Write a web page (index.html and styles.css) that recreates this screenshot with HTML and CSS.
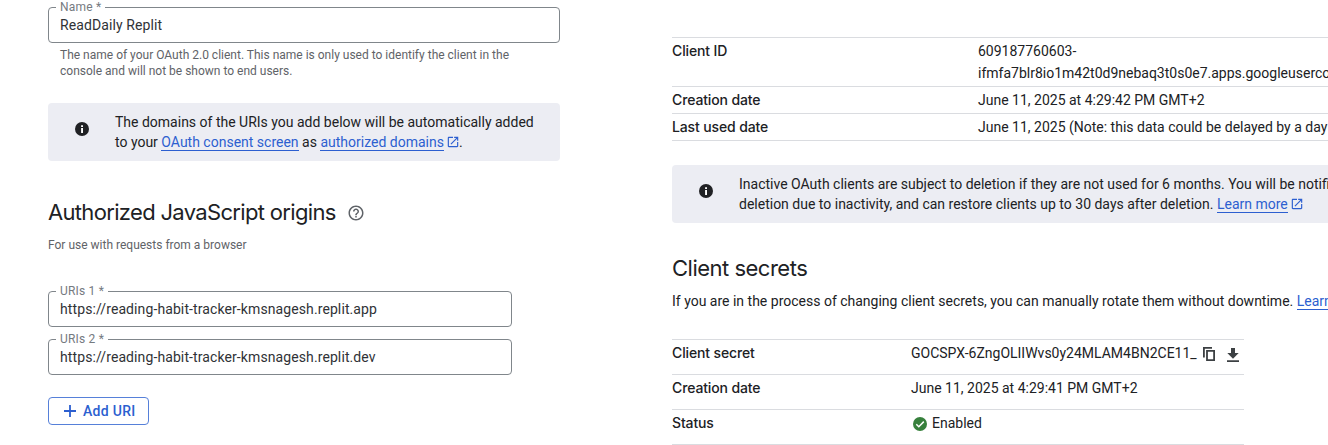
FILE: index.html
```html
<!DOCTYPE html>
<html lang="en">
<head>
<meta charset="utf-8">
<title>OAuth client</title>
<link rel="stylesheet" href="styles.css">
</head>
<body>
<svg class="defs" width="0" height="0" aria-hidden="true">
  <symbol id="info" viewBox="0 0 14 14"><circle cx="7" cy="7" r="7" fill="#202124"/><path d="M6.1 3.3h1.9v1.8H6.1zM6.1 6.1h1.9v4.8H6.1z" fill="#fff"/></symbol>
  <symbol id="external" viewBox="0 0 24 24"><path fill="currentColor" d="M19 19H5V5h7V3H5c-1.11 0-2 .9-2 2v14c0 1.1.89 2 2 2h14c1.1 0 2-.9 2-2v-7h-2v7zM14 3v2h3.59l-9.83 9.83 1.41 1.41L19 6.41V10h2V3h-7z"/></symbol>
</svg>
<main class="page">
  <section class="form">
    <fieldset class="field">
      <legend>Name *</legend>
      <div class="value">ReadDaily Replit</div>
    </fieldset>
    <p class="hint">The name of your OAuth 2.0 client. This name is only used to identify the client in the<br>console and will not be shown to end users.</p>
    <div class="notice">
      <svg class="notice-icon"><use href="#info"/></svg>
      <p class="domains">The domains of the URIs you add below will be automatically added<br>to your <a>OAuth consent screen</a> as <a>authorized domains</a><svg class="ext"><use href="#external"/></svg>.</p>
    </div>
    <h2 class="origins"><span>Authorized JavaScript origins</span>
      <svg class="help" viewBox="0 0 24 24"><path fill="#5f6368" d="M11 18h2v-2h-2v2zm1-16C6.48 2 2 6.48 2 12s4.48 10 10 10 10-4.48 10-10S17.52 2 12 2zm0 18c-4.41 0-8-3.59-8-8s3.59-8 8-8 8 3.59 8 8-3.59 8-8 8zm0-14c-2.21 0-4 1.79-4 4h2c0-1.1.9-2 2-2s2 .9 2 2c0 2-3 1.75-3 5h2c0-2.25 3-2.5 3-5 0-2.21-1.79-4-4-4z"/></svg>
    </h2>
    <p class="sub">For use with requests from a browser</p>
    <div class="uris">
      <fieldset class="field">
        <legend>URIs 1 *</legend>
        <div class="value">https://reading-habit-tracker-kmsnagesh.replit.app</div>
      </fieldset>
      <fieldset class="field">
        <legend>URIs 2 *</legend>
        <div class="value">https://reading-habit-tracker-kmsnagesh.replit.dev</div>
      </fieldset>
    </div>
    <button class="add"><svg class="plus" viewBox="0 0 12 12"><path d="M6 0v12M0 6h12" stroke="#2c5fd0" stroke-width="1.8"/></svg><span>Add URI</span></button>
  </section>

  <section class="details">
    <dl class="rows info-rows">
      <div class="row"><dt>Client ID</dt><dd>609187760603-<br>ifmfa7blr8io1m42t0d9nebaq3t0s0e7.apps.googleuserco</dd></div>
      <div class="row"><dt>Creation date</dt><dd>June 11, 2025 at 4:29:42 PM GMT+2</dd></div>
      <div class="row"><dt>Last used date</dt><dd>June 11, 2025 (Note: this data could be delayed by a day</dd></div>
    </dl>
    <div class="notice">
      <svg class="notice-icon"><use href="#info"/></svg>
      <p>Inactive OAuth clients are subject to deletion if they are not used for 6 months. You will be notifi<br>deletion due to inactivity, and can restore clients up to 30 days after deletion. <a>Learn more</a><svg class="ext"><use href="#external"/></svg></p>
    </div>
    <h2 class="secrets">Client secrets</h2>
    <p class="rotate">If you are in the process of changing client secrets, you can manually rotate them without downtime. <a>Learn</a></p>
    <dl class="rows secret-rows">
      <div class="row"><dt>Client secret</dt><dd class="secret"><span>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</span>
        <svg class="copy" viewBox="0 0 12 14"><path fill="none" stroke="#3c4043" stroke-width="1.8" d="M.9 10.4V.9H9M4 3.9h7.1v9.2H4z"/></svg>
        <svg class="download" viewBox="0 0 12 14"><path fill="#3c4043" d="M4 0h4v5h3.7L6 10.8.3 5H4zM0 12.2h12V14H0z"/></svg></dd></div>
      <div class="row"><dt>Creation date</dt><dd>June 11, 2025 at 4:29:41 PM GMT+2</dd></div>
      <div class="row"><dt>Status</dt><dd class="status"><svg class="check" viewBox="0 0 14 14"><circle cx="7" cy="7" r="7" fill="#37803c"/><path d="M3.3 7.2l2.5 2.5 5-5.1" fill="none" stroke="#fff" stroke-width="1.5"/></svg><span>Enabled</span></dd></div>
    </dl>
  </section>
</main>
</body>
</html>
```
FILE: styles.css
```css
* { box-sizing: border-box; }
body {
  margin: 0;
  height: 445px;
  overflow: hidden;
  background: #fff;
  color: #202124;
  font: 14px/20px Roboto, sans-serif;
  letter-spacing: 0;
}
p, h2, dl, dd, dt { margin: 0; }
.defs { display: block; height: 0; }
.page {
  display: grid;
  grid-template-columns: 512px 760px;
  column-gap: 112px;
  padding-left: 48px;
  width: 1328px;
  height: 445px;
  overflow: hidden;
}
.field {
  margin: 0;
  height: 43px;
  padding: 0 11px 0 7px;
  border: 1px solid #80868b;
  border-radius: 4px;
}
.field legend {
  padding: 0 4px;
  font-size: 12px;
  line-height: 15px;
  letter-spacing: 0.2px;
  color: #757a7f;
}
.uris .field legend { letter-spacing: 0.2px; }
.value { padding-left: 4px; line-height: 20px; letter-spacing: 0.1px; color: #303236; }
.hint {
  margin-top: 4px;
  padding-left: 12px;
  font-size: 12px;
  line-height: 16px;
  color: #5f6368;
}
.notice {
  display: flex;
  height: 58px;
  padding: 9px 0 0 27px;
  border-radius: 4px;
  background: #ecedf3;
  white-space: nowrap;
}
.form .notice { margin-top: 24px; }
.notice-icon { width: 14px; height: 14px; margin: 10px 26px 0 0; flex: none; }
a { color: #2c5fd0; border-bottom: 1px solid #2c5fd0; }
.ext { width: 14px; height: 14px; margin: 0 -1px 0 2px; vertical-align: -2px; color: #2c5fd0; }
h2 {
  font: 400 22px/28px Inter, Roboto, sans-serif;
  white-space: nowrap;
}
.origins { display: flex; align-items: center; gap: 11px; margin-top: 38px; letter-spacing: -0.67px; }
.origins span { padding-bottom: 2px; }
.origins { height: 28px; }
.help { width: 18px; height: 18px; }
.sub { margin-top: 10px; font-size: 12px; line-height: 16px; color: #5f6368; }
.uris { display: grid; row-gap: 5px; width: 464px; margin-top: 31px; }
.add {
  display: flex;
  align-items: center;
  gap: 7px;
  width: 101px;
  height: 28px;
  margin-top: 22px;
  padding: 0 0 0 15px;
  border: 1px solid #5680d9;
  border-radius: 4px;
  background: #fff;
  color: #2c5fd0;
  font: 500 14px/20px Roboto, sans-serif;
  letter-spacing: 0.3px;
}
.plus { width: 12px; height: 12px; }
.info-rows { margin-top: 37px; }
.rows { border-top: 1px solid #dadce0; white-space: nowrap; }
.row { display: grid; grid-template-columns: 306px 1fr; border-bottom: 1px solid #dadce0; }
.row dt { font: 500 14px/20px Inter, Roboto, sans-serif; letter-spacing: -0.13px; }
.info-rows .row { padding: 2px 0; }
.info-rows .row dt, .info-rows .row dd { line-height: 22px; }
.details .notice { margin-top: 24px; }
.secrets { margin-top: 31px; letter-spacing: -0.5px; }
.rotate { margin-top: 9px; white-space: nowrap; }
.secret-rows { width: 572px; margin-top: 28px; }
.secret-rows .row { grid-template-columns: 239px 1fr; height: 35px; padding-top: 3px; }
.secret, .status { display: flex; align-items: flex-start; }
.copy { width: 12px; height: 14px; margin: 4px 0 0 6px; }
.download { width: 12px; height: 14px; margin: 5px 0 0 12px; }
.check { width: 14px; height: 14px; margin: 4px 5px 0 2px; }
```
